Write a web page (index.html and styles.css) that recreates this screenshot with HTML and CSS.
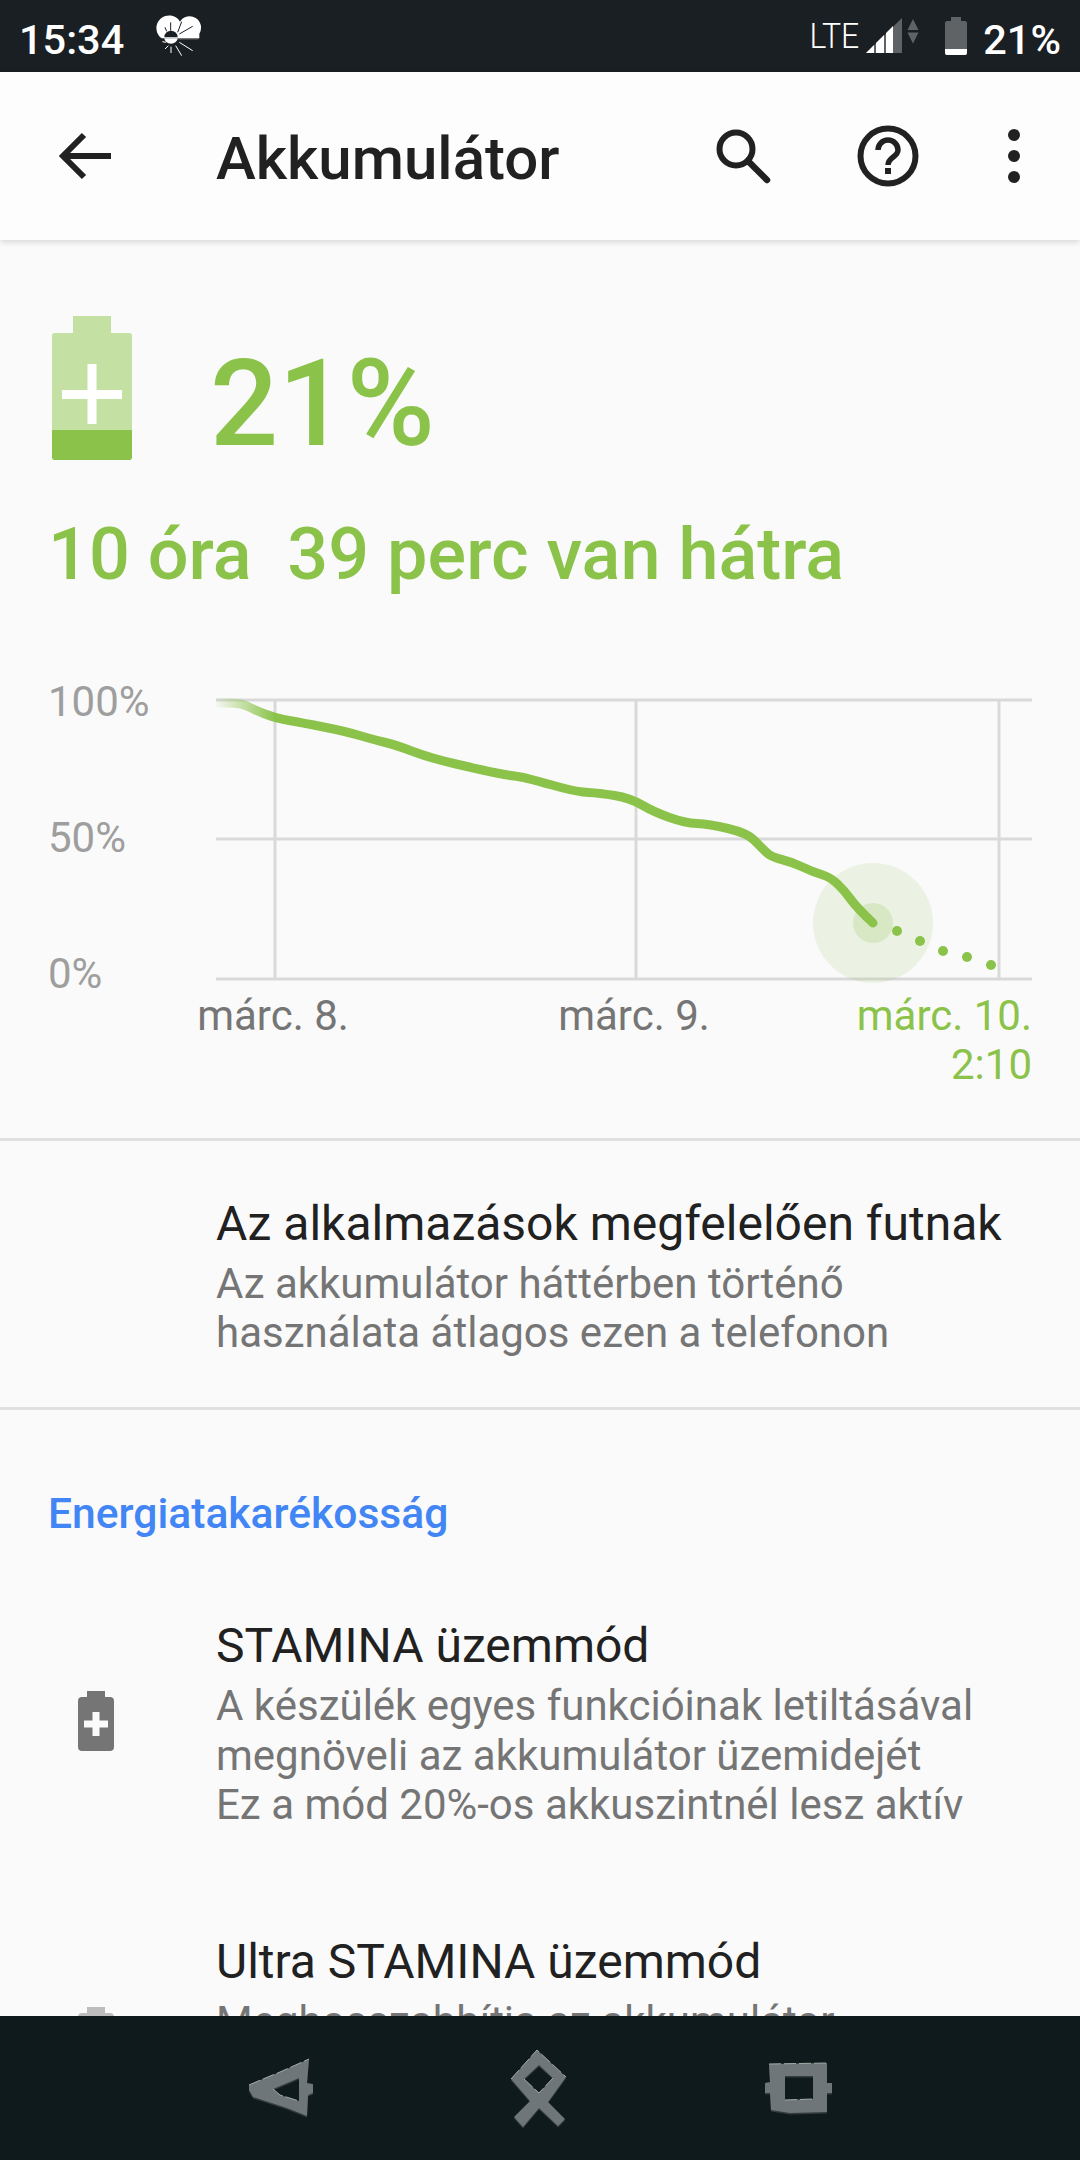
FILE: index.html
```html
<!DOCTYPE html>
<html>
<head>
	<title>Akkumulátor</title>
	<link rel="stylesheet" href="styles.css">
</head>
<body>
	<div class="statusbar">
		<div class="status-left">
			<span class="clock">15:34</span>
			<svg class="weather" width="50" height="50" viewBox="75 36 150 150">
				<path d="M95 118 A38 38 0 1 1 150 68 A28 28 0 0 1 208 104 L208 118 Z" fill="#fff"/>
				<path d="M145 118 H206 V121 H145 Z" fill="#888"/>
				<path d="M122 70 V95 M105 85 L110 97 M155 68 L143 100 M188 82 L148 105" stroke="#1a1f24" stroke-width="3" fill="none"/>
				<path d="M103 115 A20 20 0 0 1 143 115 Z" fill="#1a1f24"/>
				<path d="M103 118 A20 16 0 0 0 143 118 Z" fill="#fff"/>
				<path d="M97 128 L108 130 M105 150 L115 140 M123 162 V143 M155 170 L137 140 M188 155 L148 130" stroke="#fff" stroke-width="3" fill="none"/>
			</svg>
		</div>
		<div class="status-right">
			<span class="lte">LTE</span>
			<svg class="signal" width="53" height="36" viewBox="0 0 53 36">
				<path d="M0 35 L36 0 V35 Z" fill="#5f6366"/>
				<path d="M0 35 L8 27 V35 Z M10 35 V25 L18 17 V35 Z M20 35 V15 L27 8 V35 Z" fill="#fff"/>
				<path d="M47 1 L52.500 12 H41.500 Z M41.500 14.500 H52.500 L47 25.500 Z" fill="#5f6366"/>
			</svg>
			<svg class="status-batt" width="22" height="38" viewBox="0 0 22 38">
				<path d="M6 0 H16 V4 H20 Q22 4 22 6 V36 Q22 38 20 38 H2 Q0 38 0 36 V6 Q0 4 2 4 H6 Z" fill="#5f6366"/>
				<path d="M0 32 H22 V36 Q22 38 20 38 H2 Q0 38 0 36 Z" fill="#fff"/>
			</svg>
			<span class="clock">21%</span>
		</div>
	</div>

	<div class="appbar">
		<svg class="back" width="56" height="48" viewBox="0 0 56 48">
			<path d="M53 24 H5 M26 3 L5 24 L26 45" fill="none" stroke="#212121" stroke-width="6"/>
		</svg>
		<h1 class="title">Akkumulátor</h1>
		<svg class="search" width="56" height="56" viewBox="0 0 56 56">
			<circle cx="21" cy="21" r="16.5" fill="none" stroke="#212121" stroke-width="6"/>
			<path d="M33 33 L52 52" stroke="#212121" stroke-width="6.5" stroke-linecap="round"/>
		</svg>
		<svg class="help" width="62" height="62" viewBox="0 0 62 62">
			<circle cx="31" cy="31" r="27.5" fill="none" stroke="#212121" stroke-width="6"/>
			<path d="M21 25 A10 10 0 0 1 41 25 C41 32 31 32 31 40" fill="none" stroke="#212121" stroke-width="5.5"/>
			<rect x="28" y="43" width="6" height="6" fill="#212121"/>
		</svg>
		<div class="dots"><span></span><span></span><span></span></div>
	</div>

	<div class="content">
		<section class="summary">
			<div class="level">
				<svg width="80" height="144" viewBox="0 0 80 144">
					<path d="M21 0 H59 V17 H77 Q80 17 80 20 V141 Q80 144 77 144 H3 Q0 144 0 141 V20 Q0 17 3 17 H21 Z" fill="#c5e0a3"/>
					<path d="M0 114 H80 V141 Q80 144 77 144 H3 Q0 144 0 141 Z" fill="#8bc34a"/>
					<path d="M35.500 48 H44.500 V74 H70 V83 H44.500 V108 H35.500 V83 H10 V74 H35.500 Z" fill="#fff"/>
				</svg>
				<span class="percent">21%</span>
			</div>
			<div class="remaining">10 óra&nbsp; 39 perc van hátra</div>
		</section>

		<section class="chart">
			<div class="chart-top">
				<div class="y-labels">
					<span>100%</span>
					<span>50%</span>
					<span>0%</span>
				</div>
				<svg class="plot" width="816" height="286" viewBox="216 698 816 286">
					<defs>
						<linearGradient id="fade" gradientUnits="userSpaceOnUse" x1="216" y1="0" x2="275" y2="0">
							<stop offset="0" stop-color="#8bc34a" stop-opacity="0.05"/>
							<stop offset="1" stop-color="#8bc34a"/>
						</linearGradient>
					</defs>
					<path d="M216 700 H1032 M216 839 H1032 M216 979 H1032 M275 700 V979 M636 700 V979 M999 700 V979" fill="none" stroke="#000" stroke-opacity="0.13" stroke-width="3"/>
					<circle cx="873" cy="923" r="60" fill="#8bc34a" fill-opacity="0.13"/>
					<circle cx="873" cy="923" r="20" fill="#8bc34a" fill-opacity="0.2"/>
					<path d="M216 703 L228 703 Q241 703 248 706.500 Q255 710 265 714 Q275 718 289 720.500 Q303 723 323.500 727 Q344 731 359.500 735.500 Q375 740 385.500 742.500 Q396 745 413 751.500 Q430 758 456 764 Q482 770 494 772.500 Q506 775 514.500 776 Q523 777 533.500 780 Q544 783 561 787.500 Q578 792 588.500 792.500 Q599 793 614.500 795.500 Q630 798 642 805 Q654 812 669.500 817.500 Q685 823 697 823.500 Q709 824 728 828.500 Q747 833 754 840 Q761 847 766 852 Q771 857 781.500 859.500 Q792 862 802.500 867 Q813 872 821.500 874.500 Q830 877 837 883.500 Q844 890 850.500 899 Q857 908 873 923" fill="none" stroke="url(#fade)" stroke-width="9" stroke-linecap="round"/>
					<g fill="#8bc34a">
						<circle cx="897" cy="931" r="5"/>
						<circle cx="920" cy="941" r="5"/>
						<circle cx="943" cy="951" r="5"/>
						<circle cx="967" cy="957" r="5"/>
						<circle cx="991" cy="965" r="5"/>
					</g>
				</svg>
			</div>
			<div class="x-labels">
				<span>márc. 8.</span>
				<span class="second">márc. 9.</span>
				<span class="now">márc. 10.<br>2:10</span>
			</div>
		</section>

		<section class="row status-row">
			<div class="row-text">
				<div class="row-title">Az alkalmazások megfelelően futnak</div>
				<div class="row-sub">Az akkumulátor háttérben történő<br>használata átlagos ezen a telefonon</div>
			</div>
		</section>

		<section class="saving">
			<h2 class="section-head">Energiatakarékosság</h2>
			<div class="row stamina">
				<svg class="row-icon" width="36" height="60" viewBox="0 0 36 60">
					<path d="M9 0 H27 V6 H32 Q36 6 36 10 V56 Q36 60 32 60 H4 Q0 60 0 56 V10 Q0 6 4 6 H9 Z M14.500 21 V29.500 H6 V36.500 H14.500 V45 H21.500 V36.500 H30 V29.500 H21.500 V21 Z" fill="#757575" fill-rule="evenodd"/>
				</svg>
				<div class="row-text">
					<div class="row-title">STAMINA üzemmód</div>
					<div class="row-sub">A készülék egyes funkcióinak letiltásával<br>megnöveli az akkumulátor üzemidejét<br>Ez a mód 20%-os akkuszintnél lesz aktív</div>
				</div>
			</div>
			<div class="row ultra">
				<svg class="row-icon" width="36" height="60" viewBox="0 0 36 60">
					<path d="M9 0 H27 V6 H32 Q36 6 36 10 V56 Q36 60 32 60 H4 Q0 60 0 56 V10 Q0 6 4 6 H9 Z" fill="#bdbdbd"/>
				</svg>
				<div class="row-text">
					<div class="row-title">Ultra STAMINA üzemmód</div>
					<div class="row-sub">Meghosszabbítja az akkumulátor</div>
				</div>
			</div>
		</section>
	</div>

	<div class="navbar">
		<svg width="110" height="90" viewBox="0 0 110 90">
			<path class="rune-edge" d="M19 45 L33 39 L50 32 L79 19 L77 43 L83 44 L83 53 L78 55 L77 76 L57 68 L23 57 L19 50 Z M69 38 L43 49 L50 55 L69 61 Z"/>
			<path class="rune" d="M19 45 L33 39 L50 32 L79 19 L77 43 L83 44 L83 53 L78 55 L77 76 L57 68 L23 57 L19 50 Z M69 38 L43 49 L50 55 L69 61 Z"/>
			<path class="rune-light" d="M19 45 L33 39 L50 32 L79 19 M43 49 L50 55 L69 61"/>
		</svg>
		<svg width="100" height="90" viewBox="0 0 100 90">
			<path class="rune-edge" d="M47 10 L76 37 L58 62 L75 79 L68 86 L49 68 L33 87 L24 77 L40 61 L21 39 Z M49 25 L34 39 L49 53 L63 38 Z"/>
			<path class="rune" d="M47 10 L76 37 L58 62 L75 79 L68 86 L49 68 L33 87 L24 77 L40 61 L21 39 Z M49 25 L34 39 L49 53 L63 38 Z"/>
			<path class="rune-light" d="M21 39 L47 10 L76 37 M34 39 L49 53 L63 38"/>
		</svg>
		<svg width="100" height="90" viewBox="0 -10 100 90">
			<path class="rune-edge" d="M19 14 L77 13 L77 33 L82 33 L82 43 L77 43 L77 62 L40 63 L21 60 L20 43 L15 43 L15 33 L20 32 Z M35 26 L63 26 L63 49 L35 50 Z"/>
			<path class="rune" d="M19 14 L77 13 L77 33 L82 33 L82 43 L77 43 L77 62 L40 63 L21 60 L20 43 L15 43 L15 33 L20 32 Z M35 26 L63 26 L63 49 L35 50 Z"/>
			<path class="rune-light" d="M19 14 L77 13 M35 50 L63 49"/>
		</svg>
	</div>
</body>
</html>
```

FILE: styles.css
```css
* {
	box-sizing: border-box;
}
html, body {
	margin: 0;
	padding: 0;
}
body {
	width: 1080px;
	height: 2160px;
	overflow: hidden;
	background-color: #fafafa;
	font-family: Roboto, "Noto Sans", sans-serif;
	display: flex;
	flex-direction: column;
}
.statusbar {
	height: 72px;
	flex: none;
	background-color: #1a1f24;
	color: white;
	display: flex;
	justify-content: space-between;
	align-items: center;
	padding: 0 19px;
}
.status-left, .status-right {
	display: flex;
	align-items: center;
}
.clock {
	font-size: 41.5px;
	font-weight: 500;
	padding-top: 6px;
}
.weather {
	margin-left: 31px;
}
.lte {
	font-size: 32px;
	font-weight: 300;
	transform: scaleY(1.12);
}
.signal {
	margin-left: 7px;
}
.status-batt {
	margin: 0 16px 0 26px;
}
.appbar {
	height: 168px;
	flex: none;
	background-color: #fdfdfd;
	box-shadow: 0 2px 6px rgba(0,0,0,0.15);
	display: flex;
	align-items: center;
	position: relative;
	padding-left: 58px;
}
.title {
	margin: 4px 0 0 102px;
	font-size: 60px;
	font-weight: 500;
	color: #212121;
	flex: 1;
}
.search {
	margin-right: 86px;
}
.help {
	margin-right: 89px;
}
.dots {
	display: flex;
	flex-direction: column;
	gap: 9px;
	margin-right: 60px;
}
.dots span {
	width: 12px;
	height: 12px;
	border-radius: 50%;
	background-color: #212121;
}
.content {
	flex: 1;
	min-height: 0;
	overflow: hidden;
}
.summary {
	padding: 76px 0 0 52px;
	color: #8bc34a;
}
.level {
	display: flex;
	align-items: flex-start;
	gap: 78px;
}
.percent {
	font-size: 120px;
	font-weight: 500;
	line-height: 120px;
	margin-top: 28px;
}
.remaining {
	font-size: 72px;
	font-weight: 500;
	line-height: 84px;
	margin: 49px 0 0 -4px;
}
.chart {
	margin-top: 101px;
}
.chart-top {
	display: flex;
	padding-left: 48px;
}
.y-labels {
	width: 168px;
	height: 320px;
	margin: -20px 0 -14px;
	display: flex;
	flex-direction: column;
	justify-content: space-between;
	font-size: 42px;
	line-height: 48px;
	color: #9e9e9e;
}
.x-labels {
	display: grid;
	grid-template-columns: 200px 161px 200px 1fr;
	padding: 7px 48px 0 173px;
	font-size: 42px;
	line-height: 49px;
	color: #757575;
}
.x-labels span {
	text-align: center;
}
.x-labels .second {
	grid-column: 3;
}
.x-labels .now {
	grid-column: 4;
	text-align: right;
	color: #8bc34a;
}
.row {
	display: flex;
	align-items: flex-start;
}
.row-text {
	flex: 1;
}
.row-title {
	font-size: 48px;
	line-height: 56px;
	color: #212121;
}
.row-sub {
	font-size: 42px;
	line-height: 49.500px;
	margin-top: 7px;
	color: #757575;
}
.status-row {
	margin-top: 49px;
	height: 272px;
	padding-left: 216px;
	align-items: center;
	padding-top: 5px;
	border-top: 3px solid #e0e0e0;
	border-bottom: 3px solid #e0e0e0;
}
.section-head {
	margin: 78px 0 0 48px;
	font-size: 42.600px;
	line-height: 50px;
	font-weight: 500;
	color: #4285f4;
}
.stamina {
	margin-top: 80px;
	padding-left: 78px;
	gap: 102px;
}
.ultra {
	margin-top: 104px;
	padding-left: 78px;
	gap: 102px;
}
.row-icon {
	flex: none;
	margin-top: 73px;
}
.navbar {
	height: 144px;
	flex: none;
	background-color: #0f1a1c;
	display: flex;
	padding: 24px 0 0 230px;
	gap: 150px;
	position: relative;
}
.navbar svg:last-child {
	margin-left: 10px;
}
.rune {
	fill: #6f767a;
	fill-rule: evenodd;
}
.rune-edge {
	fill: #353c3f;
	fill-rule: evenodd;
	transform: translateY(1.5px);
}
.rune-light {
	fill: none;
	stroke: #a3aca8;
	stroke-width: 1;
	stroke-dasharray: 12 3;
}
```
